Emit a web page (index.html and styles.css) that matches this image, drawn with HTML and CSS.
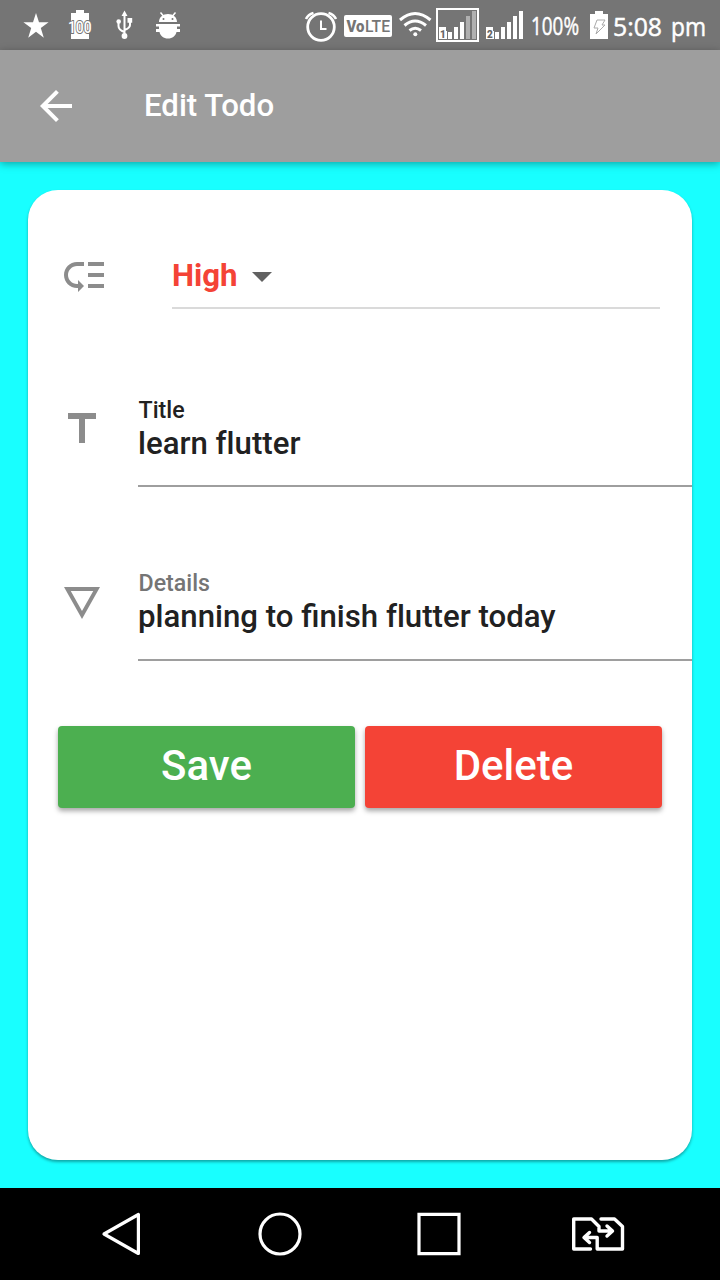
FILE: index.html
```html
<!DOCTYPE html>
<html lang="en">
<head>
<meta charset="utf-8">
<title>Edit Todo</title>
<link rel="stylesheet" href="styles.css">
</head>
<body>
<div class="screen">
  <div class="status-bar">
    <div class="notifications">
      <svg width="28" height="50" viewBox="22 0 28 50" fill="#fff"><path d="M36 13l3 9.3h9.6l-7.8 5.8 3 9.7-7.8-6-7.8 6 3-9.7-7.8-5.8H33z"/></svg>
      <svg width="28" height="50" viewBox="66 0 28 50" fill="#fff"><path d="M76 10h8v3h5v26H71V13h5z"/><text class="battery-level" x="68" y="33" textLength="23.500" lengthAdjust="spacingAndGlyphs">100</text></svg>
      <svg width="28" height="50" viewBox="110 0 28 50"><g fill="none" stroke="#fff" stroke-width="2"><path d="M124.500 14V36M118.500 22v4q0 4 6 6M130 21v4q0 3-5.500 5"/></g><g fill="#fff"><path d="M124.500 10.500l3 5.500h-6zM127.500 18h4.700v4.700h-4.700z"/><circle cx="118.700" cy="21.500" r="2.300"/><circle cx="124.500" cy="36" r="2.900"/></g></svg>
      <svg width="28" height="50" viewBox="154 0 28 50"><path d="M160.500 12.500l3 3.500M175.500 12.500l-3 3.500" stroke="#fff" stroke-width="1.500"/><path fill="#fff" d="M159 22c0-5 4-8 9-8s9 3 9 8zM156 24h24v2.500h-3v2.500h3v3h-3.500c-1 4-4 6.500-8.500 6.500s-7.500-2.500-8.500-6.500H156v-3h3v-2.500h-3z"/><circle cx="163.500" cy="19" r="1" fill="#757575"/><circle cx="172.500" cy="19" r="1" fill="#757575"/></svg>
    </div>
    <div class="indicators">
      <svg width="36" height="50" viewBox="304 0 36 50" fill="none" stroke="#fff"><circle cx="321" cy="27" r="13.300" stroke-width="2.800"/><path d="M321 20.500v8.500h5.500" stroke-width="2"/><path d="M306 19q2-4.500 7.500-6M336 19q-2-4.500-7.500-6" stroke-width="2.600"/></svg>
      <svg class="gap-small" width="48" height="50" viewBox="344 0 48 50"><rect x="344" y="15" width="48" height="22" rx="2" fill="#fff"/><text class="volte" y="32"><tspan class="volte-strong" x="346.500" textLength="18" lengthAdjust="spacingAndGlyphs">Vo</tspan><tspan x="365" textLength="25" lengthAdjust="spacingAndGlyphs">LTE</tspan></text></svg>
      <svg class="gap-medium" width="34" height="50" viewBox="398 0 34 50" fill="none" stroke="#fff" stroke-width="3"><path d="M400 20q15-13 30.500 0M404.500 25.500q10.500-9 21.500 0M409.500 30.500q5.700-4.500 11.500 0"/><circle cx="415.300" cy="34.300" r="2" fill="#fff" stroke="none"/></svg>
      <svg class="gap-small" width="44" height="50" viewBox="436 0 44 50"><rect x="437" y="9" width="41" height="32" fill="none" stroke="#fff" stroke-width="2"/><path fill="#fff" d="M439 27h7v4h1v8h-8zM448 32h4v7h-4zM454 27h4v12h-4zM460 22h4v17h-4z"/><path fill="#b0b0b0" d="M466 16h4v23h-4zM472 11h4v28h-4z"/><text class="sim" x="440" y="37.500">1</text></svg>
      <svg class="gap-medium" width="38" height="50" viewBox="486 0 38 50"><path fill="#fff" d="M486 27h7v4h1v8h-8zM495 32h4v7h-4zM501 27h4v12h-4zM507 22h4v17h-4zM513 16h4v23h-4zM519 11h4v28h-4z"/><text class="sim" x="487" y="37.500">2</text></svg>
      <svg class="gap-medium" width="52" height="50" viewBox="530 0 52 50"><text class="clock" x="531" y="34.500" textLength="48" lengthAdjust="spacingAndGlyphs">100%</text></svg>
      <svg class="gap-large" width="18" height="50" viewBox="590 0 18 50"><path fill="#fff" d="M595 11h8v3h5v25h-18V14h5z"/><path fill="none" stroke="#aaa" d="M597 20h8l-3 5h3l-9 9 2-6h-4z"/></svg>
      <svg class="gap-small" width="96" height="50" viewBox="612 0 96 50"><text class="clock" y="35.500"><tspan x="613" textLength="49" lengthAdjust="spacingAndGlyphs">5:08</tspan><tspan x="671" textLength="35" lengthAdjust="spacingAndGlyphs">pm</tspan></text></svg>
    </div>
  </div>
  <header class="app-bar">
    <svg class="icon back" viewBox="0 0 24 24"><path d="M20 11H7.830l5.590-5.590L12 4l-8 8 8 8 1.410-1.410L7.830 13H20v-2z"/></svg>
    <h1 class="app-title">Edit Todo</h1>
  </header>
  <main class="content">
    <section class="card">
      <div class="priority">
        <svg class="icon" viewBox="0 0 24 24"><path d="M14 5h8v2h-8zm0 5.500h8v2h-8zm0 5.500h8v2h-8zM2 11.500C2 15.080 4.920 18 8.500 18H9v2l3-3-3-3v2h-.5C6.020 16 4 13.980 4 11.500S6.020 7 8.500 7H12V5H8.500C4.920 5 2 7.920 2 11.500z"/></svg>
        <div class="dropdown">
          <span class="priority-value">High</span>
          <svg class="icon caret" viewBox="0 0 24 24"><path d="M7 10l5 5 5-5z"/></svg>
        </div>
      </div>
      <div class="field title-field">
        <svg class="icon" viewBox="0 0 24 24"><path d="M5 4v3h5.500v12h3V7H19V4z"/></svg>
        <div class="input">
          <div class="label label-dark">Title</div>
          <div class="value">learn <span class="unligated">flutter</span></div>
        </div>
      </div>
      <div class="field details-field">
        <svg class="icon" viewBox="0 0 24 24"><path fill-rule="evenodd" d="M3 4l9 16 9-16H3zm3.380 2h11.250L12 16 6.380 6z"/></svg>
        <div class="input">
          <div class="label">Details</div>
          <div class="value">planning to finish <span class="unligated">flutter</span> today</div>
        </div>
      </div>
      <div class="actions">
        <div class="button save">Save</div>
        <div class="button delete">Delete</div>
      </div>
    </section>
  </main>
  <nav class="nav-bar">
    <svg width="42" height="52" viewBox="100 1208 42 52" fill="none" stroke="#fff" stroke-width="3.200" stroke-linejoin="round"><path d="M138.400 1214.500v39L104 1234z"/></svg>
    <svg class="home" width="46" height="52" viewBox="257 1208 46 52" fill="none" stroke="#fff" stroke-width="3.200"><circle cx="280" cy="1234" r="20"/></svg>
    <svg class="recents" width="46" height="52" viewBox="416 1208 46 52" fill="none" stroke="#fff" stroke-width="3.200"><path d="M419 1214.300h40v39.400h-40z"/></svg>
    <svg class="sim-switch" width="54" height="52" viewBox="571 1208 54 52" fill="none" stroke="#fff" stroke-width="3.400" stroke-linejoin="round" stroke-linecap="round"><path d="M590.500 1249H573.700v-30H591.500l7.500 7.500v4.500h12.500M607 1226l5.500 5-5.500 5M601 1219h13.500l8 7.500V1249H597.200v-11.500H585M589.500 1232.500l-5.500 5 5.500 5"/></svg>
  </nav>
</div>
</body>
</html>
```
FILE: styles.css
```css
body {
  margin: 0;
  font-family: Roboto, "Liberation Sans", sans-serif;
  font-weight: 500;
}

svg {
  display: block;
  flex: none;
  overflow: visible;
}

.screen {
  display: flex;
  flex-direction: column;
  width: 720px;
  height: 1280px;
  overflow: hidden;
}

.status-bar {
  display: flex;
  justify-content: space-between;
  height: 50px;
  padding: 0 12px 0 22px;
  background: #757575;
}

.notifications {
  display: flex;
  gap: 16px;
}

.indicators {
  display: flex;
}

.gap-small {
  margin-left: 4px;
}

.gap-medium {
  margin-left: 6px;
}

.gap-large {
  margin-left: 8px;
}

.battery-level {
  font: 500 17px Roboto, sans-serif;
  fill: #fff;
  stroke: #757575;
  stroke-width: 2px;
  paint-order: stroke;
}

.volte {
  font: 500 17px Roboto, sans-serif;
  fill: #757575;
}

.volte-strong {
  font-weight: 900;
}

.sim {
  font: 900 10px Roboto, sans-serif;
  fill: #666;
}

.clock {
  font: 400 25px "Open Sans", sans-serif;
  fill: #fff;
  stroke: #fff;
  stroke-width: 0.5px;
  stroke-linejoin: round;
}

.app-bar {
  display: flex;
  align-items: center;
  gap: 64px;
  height: 112px;
  padding-left: 32px;
  background: #9e9e9e;
  box-shadow: 0 2px 8px rgba(0, 0, 0, 0.35);
  z-index: 1;
}

.icon {
  width: 48px;
  height: 48px;
  fill: #8c8c8c;
}

.back {
  fill: #fff;
}

.app-title {
  margin: 0;
  color: #fff;
  font-size: 31.2px;
  font-weight: 500;
  line-height: 36px;
}

.content {
  height: 1026px;
  padding: 28px;
  box-sizing: border-box;
  background: #18ffff;
}

.card {
  height: 970px;
  border-radius: 30px;
  background: #fff;
  box-shadow: 0 2px 3px rgba(0, 0, 0, 0.35);
}

.priority {
  display: flex;
  gap: 64px;
  height: 119px;
  padding: 0 32px;
  box-sizing: border-box;
}

.priority > .icon {
  margin-top: 62px;
}

.dropdown {
  display: flex;
  flex: 1;
  height: 58px;
  margin-top: 61px;
  box-sizing: border-box;
  border-bottom: 2px solid #dadada;
  line-height: 50px;
}

.priority-value {
  width: 66px;
  color: #f44336;
  font-size: 31.2px;
  font-weight: 700;
}

.caret {
  margin-top: 1px;
  fill: #616161;
}

.field {
  display: flex;
  gap: 32px;
  padding-left: 30px;
}

.title-field {
  height: 91px;
  margin-top: 87px;
}

.title-field > .icon {
  margin-top: 9px;
}

.details-field {
  height: 92px;
  margin-top: 82px;
}

.details-field > .icon {
  margin-top: 10px;
}

.input {
  flex: 1;
  border-bottom: 2px solid #9e9e9e;
  box-sizing: border-box;
}

.label {
  color: #757575;
  font-size: 23.2px;
  line-height: 28px;
  text-indent: 0.5px;
}

.label-dark {
  color: #212121;
}

.value {
  margin-top: 2px;
  color: #212121;
  font-size: 31.2px;
  line-height: 36px;
}

.unligated {
  font-variant-ligatures: none;
}

.actions {
  display: flex;
  gap: 10px;
  margin-top: 65px;
  padding: 0 30px;
}

.button {
  flex: 1;
  height: 82px;
  border-radius: 4px;
  box-shadow: 0 3px 5px rgba(0, 0, 0, 0.35);
  color: #fff;
  font-size: 42px;
  line-height: 79px;
  text-align: center;
}

.save {
  background: #4caf50;
}

.delete {
  background: #f44336;
}

.nav-bar {
  display: flex;
  align-items: center;
  height: 92px;
  padding-left: 100px;
  box-sizing: border-box;
  background: #000;
}

.home {
  margin-left: 115px;
}

.recents {
  margin-left: 113px;
}

.sim-switch {
  margin-left: 109px;
}
```
